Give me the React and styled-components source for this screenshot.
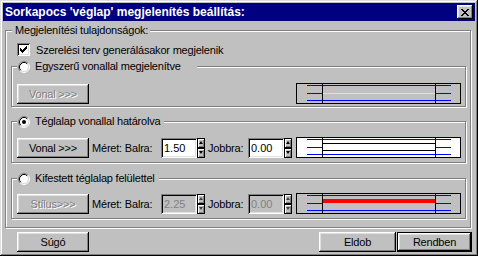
import React from 'react';
import styled, { createGlobalStyle } from 'styled-components';

const GlobalStyle = createGlobalStyle`
  html, body {
    margin: 0;
    padding: 0;
    background: #c0c0c0;
  }
  body {
    font-family: "Liberation Sans", Arial, sans-serif;
    font-size: 11px;
    color: #000;
  }
  * {
    box-sizing: border-box;
  }
`;

const Window = styled.div`
  width: 478px;
  height: 256px;
  padding: 3px;
  display: flex;
  flex-direction: column;
  background: #c0c0c0;
  box-shadow: inset -1px -1px #000, inset 1px 1px #dfdfdf,
    inset -2px -2px #808080, inset 2px 2px #fff;
`;

const TitleBar = styled.div`
  height: 18px;
  display: flex;
  align-items: center;
  padding: 0 2px 0 2px;
  background: #000080;
`;

const TitleText = styled.span`
  color: #fff;
  font-weight: bold;
  font-size: 12px;
  white-space: nowrap;
`;

const CloseButton = styled.div`
  margin-left: auto;
  width: 16px;
  height: 14px;
  background: #c0c0c0;
  display: flex;
  align-items: center;
  justify-content: center;
  box-shadow: inset -1px -1px #000, inset 1px 1px #fff,
    inset -2px -2px #808080, inset 2px 2px #dfdfdf;
`;

const Body = styled.div`
  display: flex;
  flex-direction: column;
  padding: 0 3px 0 2px;
`;

const GroupBox = styled.div`
  display: flex;
  flex-direction: column;
  flex-shrink: 0;
  border: 1px solid #808080;
  box-shadow: inset 1px 1px #fff, 1px 1px #fff;
  margin-top: ${p => p.$mt}px;
  margin-right: ${p => p.$mr || 0}px;
  height: ${p => (p.$h ? `${p.$h}px` : 'auto')};
  padding: 0 4px ${p => p.$pb || 0}px 5px;
`;

const Legend = styled.div`
  align-self: flex-start;
  display: flex;
  align-items: center;
  height: 13px;
  line-height: 13px;
  margin: -7px 0 0 ${p => p.$ml}px;
  padding: 0 ${p => p.$pr}px 0 ${p => p.$pl}px;
  background: #c0c0c0;
  white-space: nowrap;
  letter-spacing: -0.2px;
`;

const CheckRow = styled.div`
  display: flex;
  align-items: center;
  height: 13px;
  margin: 6px 0 0 6px;
  letter-spacing: -0.2px;
`;

const CheckBox = styled.div`
  width: 13px;
  height: 13px;
  margin-right: 6px;
  background: #fff;
  box-shadow: inset 1px 1px #808080, inset -1px -1px #fff,
    inset 2px 2px #000, inset -2px -2px #dfdfdf;
  display: flex;
  align-items: center;
  justify-content: center;
`;

const RadioWrap = styled.span`
  display: inline-flex;
  width: 12px;
  height: 12px;
  margin-right: 5px;
`;

const Row = styled.div`
  display: flex;
  align-items: center;
  height: 21px;
  margin-top: ${p => p.$mt}px;
`;

const Button = styled.div`
  width: ${p => p.$w || 72}px;
  height: 20px;
  flex-shrink: 0;
  display: flex;
  align-items: center;
  justify-content: center;
  background: #c0c0c0;
  letter-spacing: -0.2px;
  color: ${p => (p.$disabled ? '#808080' : '#000')};
  text-shadow: ${p => (p.$disabled ? '1px 1px 0 #fff' : 'none')};
  box-shadow: ${p =>
    p.$default
      ? 'inset 0 0 0 1px #000, inset -2px -2px #000, inset 2px 2px #fff, inset -3px -3px #808080, inset 3px 3px #dfdfdf'
      : 'inset -1px -1px #000, inset 1px 1px #fff, inset -2px -2px #808080, inset 2px 2px #dfdfdf'};
  margin-left: ${p => p.$ml || 0}px;
`;

const Label = styled.span`
  width: ${p => p.$w}px;
  margin-left: 3px;
  flex-shrink: 0;
  white-space: nowrap;
  letter-spacing: -0.2px;
`;

const Field = styled.div`
  width: 36px;
  height: 20px;
  flex-shrink: 0;
  padding: 0 3px;
  line-height: 20px;
  background: ${p => (p.$disabled ? '#c0c0c0' : '#fff')};
  color: ${p => (p.$disabled ? '#808080' : '#000')};
  box-shadow: inset 1px 1px #808080, inset -1px -1px #fff,
    inset 2px 2px #000, inset -2px -2px #dfdfdf;
`;

const Spin = styled.div`
  width: 8px;
  height: 20px;
  flex-shrink: 0;
  display: flex;
  flex-direction: column;
`;

const SpinHalf = styled.div`
  flex: 1;
  display: flex;
  align-items: center;
  justify-content: center;
  background: #c0c0c0;
  box-shadow: inset 0 0 0 1px #000, inset 2px 2px #fff, inset -2px -2px #808080;
`;

const Arrow = styled.div`
  width: 0;
  height: 0;
  border-left: 2px solid transparent;
  border-right: 2px solid transparent;
  ${p =>
    p.$up
      ? `border-bottom: 3px solid ${p.$disabled ? '#404040' : '#000'};`
      : `border-top: 3px solid ${p.$disabled ? '#404040' : '#000'};`}
`;

const PreviewBox = styled.svg`
  display: block;
  flex-shrink: 0;
  margin-left: auto;
  background: ${p => p.$bg};
`;

const BottomRow = styled.div`
  display: flex;
  align-items: center;
  margin: 4px -1px 0 12px;
`;

const Radio = ({ checked }) => (
  <RadioWrap>
    <svg width="12" height="12" viewBox="0 0 12 12">
      <circle cx="6" cy="6" r="4.5" fill="#fff" />
      <path d="M2.11 9.89 A5.5 5.5 0 0 1 9.89 2.11" stroke="#808080" fill="none" />
      <path d="M9.89 2.11 A5.5 5.5 0 0 1 2.11 9.89" stroke="#fff" fill="none" />
      <path d="M2.82 9.18 A4.5 4.5 0 0 1 9.18 2.82" stroke="#000" fill="none" />
      <path d="M9.18 2.82 A4.5 4.5 0 0 1 2.82 9.18" stroke="#dfdfdf" fill="none" />
      {checked && <circle cx="6" cy="6" r="2" fill="#000" />}
    </svg>
  </RadioWrap>
);

const Spinner = ({ disabled }) => (
  <Spin>
    <SpinHalf>
      <Arrow $up $disabled={disabled} />
    </SpinHalf>
    <SpinHalf>
      <Arrow $disabled={disabled} />
    </SpinHalf>
  </Spin>
);

// line-style previews: x in px from the box edge
const Preview = ({ bg, kind }) => (
  <PreviewBox width="165" height="21" $bg={bg} shapeRendering="crispEdges">
    <rect x="0.5" y="0.5" width="164" height="20" fill="none" stroke="#000" />
    <line x1="11" y1="2.5" x2="155" y2="2.5" stroke="#0000ff" />
    <line x1="11" y1="17.5" x2="155" y2="17.5" stroke="#0000ff" />
    <line x1="11" y1="10.5" x2="26" y2="10.5" stroke="#0000ff" />
    <line x1="140" y1="10.5" x2="155" y2="10.5" stroke="#0000ff" />
    {kind === 'line' && <line x1="27" y1="10.5" x2="139" y2="10.5" stroke="#ffff00" />}
    {kind === 'rect' && (
      <>
        <line x1="27" y1="6.5" x2="139" y2="6.5" stroke="#000" />
        <line x1="27" y1="13.5" x2="139" y2="13.5" stroke="#000" />
      </>
    )}
    {kind === 'fill' && <rect x="27" y="6" width="112" height="4" fill="#ff0000" />}
    <line x1="26.5" y1="0" x2="26.5" y2="21" stroke="#000" />
    <line x1="139.5" y1="0" x2="139.5" y2="21" stroke="#000" />
  </PreviewBox>
);

const App = () => {
  return (
    <>
      <GlobalStyle />
      <Window>
        <TitleBar>
          <TitleText>Sorkapocs 'véglap' megjelenítés beállítás:</TitleText>
          <CloseButton>
            <svg width="8" height="7" viewBox="0 0 8 7" shapeRendering="crispEdges">
              <path d="M0 0h2v1h-2z M6 0h2v1h-2z M1 1h2v1h-2z M5 1h2v1h-2z M2 2h4v1h-4z M3 3h2v1h-2z M2 4h4v1h-4z M1 5h2v1h-2z M5 5h2v1h-2z M0 6h2v1h-2z M6 6h2v1h-2z" fill="#000" />
            </svg>
          </CloseButton>
        </TitleBar>

        <Body>
          <GroupBox $mt={9} $mr={1} $pb={8}>
            <Legend $ml={1} $pl={3} $pr={2}>Megjelenítési tulajdonságok:</Legend>
            <CheckRow>
              <CheckBox>
                <svg width="7" height="7" viewBox="0 0 7 7" shapeRendering="crispEdges">
                  <path d="M6 0h1v1h-1z M5 1h2v1h-2z M0 2h1v1h-1z M4 2h3v1h-3z M0 3h2v1h-2z M3 3h3v1h-3z M0 4h5v1h-5z M1 5h3v1h-3z M2 6h1v1h-1z" fill="#000" />
                </svg>
              </CheckBox>
              Szerelési terv generálásakor megjelenik
            </CheckRow>

            <GroupBox $mt={10} $h={41}>
              <Legend $ml={0} $pl={1} $pr={16}>
                <Radio />
                Egyszerű vonallal megjelenítve
              </Legend>
              <Row $mt={10}>
                <Button $disabled>Vonal &gt;&gt;&gt;</Button>
                <Preview bg="#c0c0c0" kind="line" />
              </Row>
            </GroupBox>

            <GroupBox $mt={14} $h={42}>
              <Legend $ml={0} $pl={1} $pr={4}>
                <Radio checked />
                Téglalap vonallal határolva
              </Legend>
              <Row $mt={9}>
                <Button>Vonal &gt;&gt;&gt;</Button>
                <Label $w={69}>Méret: Balra:</Label>
                <Field>1.50</Field>
                <Spinner />
                <Label $w={40}>Jobbra:</Label>
                <Field>0.00</Field>
                <Spinner />
                <Preview bg="#fff" kind="rect" />
              </Row>
            </GroupBox>

            <GroupBox $mt={15} $h={41}>
              <Legend $ml={0} $pl={1} $pr={4}>
                <Radio />
                Kifestett téglalap felülettel
              </Legend>
              <Row $mt={8}>
                <Button $disabled>Stílus&gt;&gt;&gt;</Button>
                <Label $w={69}>Méret: Balra:</Label>
                <Field $disabled>2.25</Field>
                <Spinner disabled />
                <Label $w={40}>Jobbra:</Label>
                <Field $disabled>0.00</Field>
                <Spinner disabled />
                <Preview bg="#c0c0c0" kind="fill" />
              </Row>
            </GroupBox>
          </GroupBox>

          <BottomRow>
            <Button>Súgó</Button>
            <Button $w={77} $ml={230}>Eldob</Button>
            <Button $w={75} $ml={1} $default>Rendben</Button>
          </BottomRow>
        </Body>
      </Window>
    </>
  );
};

export default App;
